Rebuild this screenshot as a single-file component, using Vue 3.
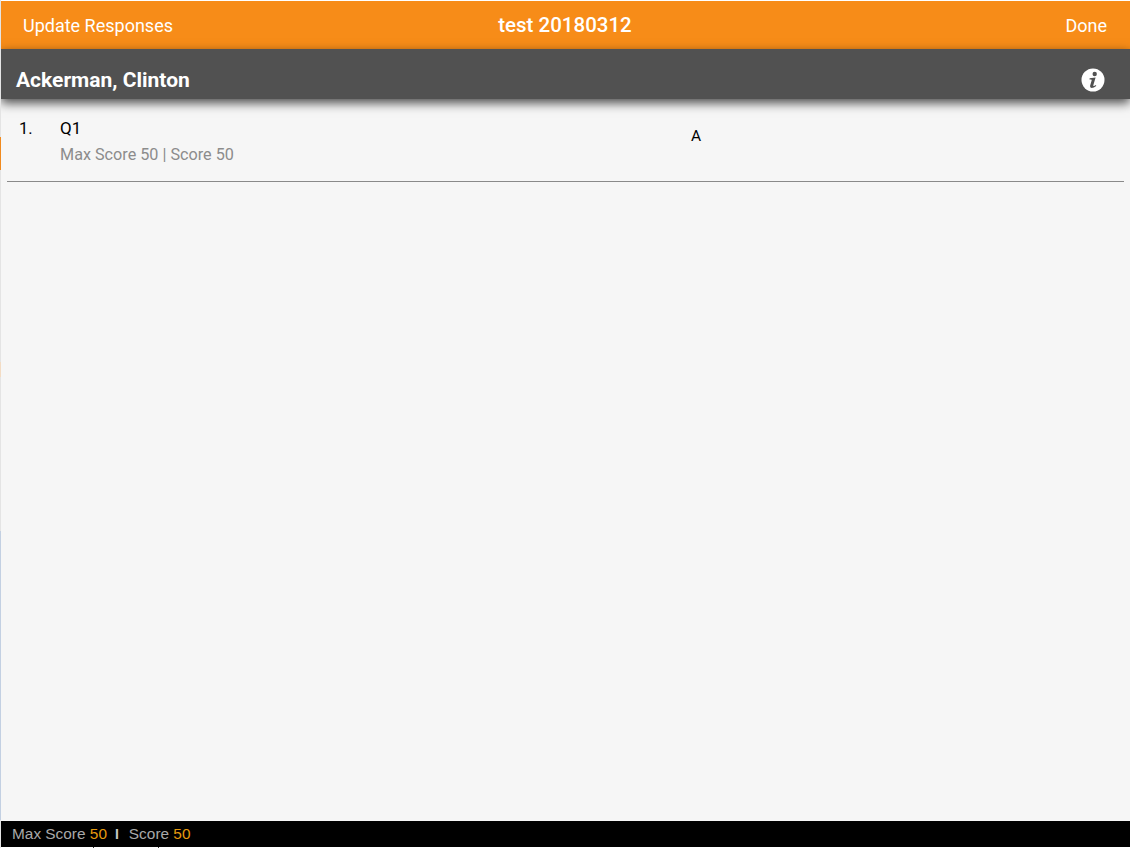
<template>
  <div class="frame">
    <div class="screen">
      <header class="top-bar">
        <span class="top-link">Update Responses</span>
        <span class="top-title">test 20180312</span>
        <span class="top-link">Done</span>
      </header>

      <div class="student-bar">
        <span class="student-name">Ackerman, Clinton</span>
        <svg class="info-icon" width="24" height="24" viewBox="0 0 24 24">
          <circle cx="12" cy="12" r="11.5" fill="#fff" />
          <circle cx="13.7" cy="6" r="2.2" fill="#515151" />
          <path d="M8.6 10.3 L14.6 9.5 L12.3 17.2 Q12.1 18.2 13 17.9 L15 16.9 L15.2 18 Q12.8 20 10.6 20 Q8.6 19.9 9.1 17.8 L10.7 12.3 Q10.8 11.6 10 11.5 L8.5 11.4 Z" fill="#515151" />
        </svg>
      </div>

      <main class="question-list">
        <div class="question-row" v-for="q in questions" :key="q.num">
          <span class="question-num">{{ q.num }}.</span>
          <div class="question-text">
            <div class="question-name">{{ q.name }}</div>
            <div class="question-score">Max Score {{ q.max }} | Score {{ q.score }}</div>
          </div>
          <div class="question-answer">{{ q.answer }}</div>
        </div>
      </main>

      <footer class="score-bar">
        Max Score&nbsp;<b>{{ total.max }}</b>
        <span class="sep">I</span>
        Score&nbsp;<b>{{ total.score }}</b>
      </footer>
    </div>
  </div>
</template>

<script setup>
import { ref } from 'vue'

const questions = ref([
  { num: 1, name: 'Q1', max: 50, score: 50, answer: 'A' }
])

const total = ref({ max: 50, score: 50 })
</script>

<style>
html, body {
  margin: 0;
  background: #fff;
}
</style>

<style scoped>
/* the 1px strip on the left and the ticks at the bottom show what is behind the panel */
.frame {
  width: 1132px;
  height: 848px;
  box-sizing: border-box;
  padding: 1px 2px 1px 1px;
  background:
    linear-gradient(#333, #333) 93px 847px / 1px 1px no-repeat,
    linear-gradient(#333, #333) 158px 847px / 1px 1px no-repeat,
    linear-gradient(
      to bottom,
      #e4e4e4 0 137px,
      #f08a1e 137px 170px,
      #e4e4e4 170px 362px,
      #f3dcc4 362px 377px,
      #e4e4e4 377px 531px,
      #c3d0e2 531px 820px,
      #e4e4e4 820px
    ) left top / 1px 100% no-repeat,
    #fff;
}

.screen {
  height: 100%;
  display: flex;
  flex-direction: column;
  background: #f6f6f6;
  font-family: Roboto, "Liberation Sans", sans-serif;
  overflow: hidden;
}

.top-bar {
  height: 48px;
  flex: none;
  display: flex;
  align-items: center;
  justify-content: space-between;
  padding: 0 23px 0 22px;
  background: #f78c18;
  color: #fff;
}

.top-link {
  font-size: 18px;
  width: 180px;
}

.top-link:last-child {
  text-align: right;
}

.top-title {
  font-size: 20.5px;
  font-weight: 500;
}

.student-bar {
  height: 50px;
  flex: none;
  box-sizing: border-box;
  display: flex;
  align-items: center;
  justify-content: space-between;
  padding: 12px 25px 0 15px;
  background: #515151;
  box-shadow: 0 4px 10px rgba(0, 0, 0, 0.7);
  position: relative;
}

.student-name {
  color: #fff;
  font-size: 21px;
  font-weight: 700;
}

.info-icon {
  display: block;
}

.question-list {
  flex: 1;
  padding: 0 6px;
}

.question-row {
  display: flex;
  height: 83px;
  box-sizing: border-box;
  border-bottom: 1px solid #8a8a8a;
  padding: 20px 0 0 12px;
}

.question-num {
  width: 41px;
  font-size: 16.5px;
  line-height: 19px;
  color: #000;
}

.question-name {
  font-size: 17px;
  line-height: 19px;
  color: #000;
}

.question-score {
  margin-top: 7px;
  font-size: 16.2px;
  line-height: 19px;
  color: #8c8c8c;
}

.question-text {
  width: 631px;
}

.question-answer {
  margin-top: 9px;
  font-size: 15.5px;
  line-height: 17px;
  color: #000;
}

.score-bar {
  height: 26px;
  flex: none;
  display: flex;
  align-items: center;
  padding-left: 11px;
  background: #000;
  color: #a9a9a9;
  font-family: "Liberation Sans", Arial, sans-serif;
  font-size: 15.4px;
}

.score-bar b {
  font-weight: 400;
  color: #e69a0e;
}

.sep {
  margin: 0 10px 0 8px;
  font-size: 14px;
  font-weight: 700;
  color: #c8c8c8;
}
</style>
